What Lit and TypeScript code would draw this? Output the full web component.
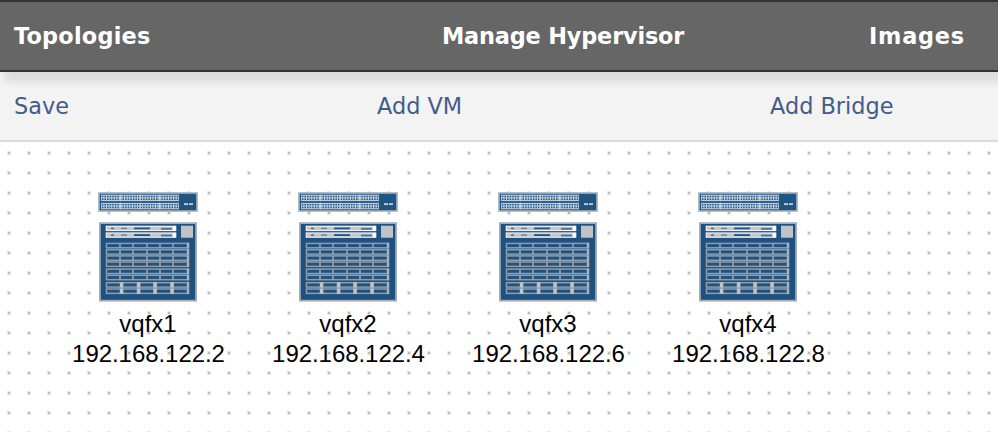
import { LitElement, html, css, svg } from "lit";
import { customElement, property } from "lit/decorators.js";

const range = (n: number) => Array.from({ length: n }, (_, i) => i);

@customElement("switch-icon")
class SwitchIcon extends LitElement {
  static styles = css`
    :host { display: block; width: 100px; height: 110px; }
    svg { display: block; }
  `;

  private ports(y: number) {
    return svg`
      <rect x="3" y=${y} width="78" height="6.4" fill="#b9cbdc"/>
      ${range(30).map((i) => svg`
        <rect x=${3.9 + i * 2.58} y=${y + 1.1} width="1.5" height="1.5" fill="#235484"/>
        <rect x=${3.9 + i * 2.58} y=${y + 3.8} width="1.5" height="1.5" fill="#235484"/>`)}
      ${[22.5, 42, 61.5].map((x) => svg`<rect x=${x - 0.2} y=${y} width="0.8" height="6.4" fill="#e4ecf4"/>`)}`;
  }

  private slot(y: number) {
    return svg`
      <rect x="7.7" y=${y} width="70.6" height="5.4" fill="#f6f8fa"/>
      <rect x="8.7" y=${y + 1} width="66" height="3.4" fill="#c4c6ca"/>
      <rect x="13" y=${y + 2} width="3" height="1.4" fill="#41688f"/>
      <rect x="23" y=${y + 2} width="6" height="1.4" fill="#6d87a3"/>
      <rect x="36" y=${y + 1.8} width="16" height="1.8" fill="#1f5687"/>
      <rect x="63" y=${y + 2.2} width="11" height="1.8" fill="#4c7298"/>`;
  }

  private card(y: number) {
    return svg`
      <rect x="8.5" y=${y} width="82.1" height="4.4" fill="#20527f" stroke="#8f9dab" stroke-width="1.5"/>
      ${[22, 35, 49, 62, 75].map((x) => svg`<rect x=${x - 0.8} y=${y} width="1.6" height="4.4" fill="#96a4b2"/>`)}
      <rect x="88.8" y=${y - 0.6} width="2.2" height="5.6" fill="#a9b3bf"/>`;
  }

  private power(y: number) {
    return svg`
      <rect x="8.5" y=${y} width="82.1" height="4.4" fill="#20527f" stroke="#8f9dab" stroke-width="1.5"/>
      ${[23.5, 40.5, 57, 74].map((x) => svg`<rect x=${x - 1.7} y=${y - 0.5} width="3.6" height="5.4" fill="#c0c3c7"/>`)}
      <rect x="88.8" y=${y - 0.6} width="2.2" height="5.6" fill="#a9b3bf"/>`;
  }

  render() {
    return html`<svg width="100" height="110" viewBox="0 0 100 110">
      <rect x="0.9" y="0.9" width="98.2" height="18.2" fill="#1f5583" stroke="#b1b9c2" stroke-width="1.7"/>
      ${this.ports(2.7)}${this.ports(10.9)}
      <rect x="86" y="11.2" width="4" height="1.8" fill="#c3cfdb"/>
      <rect x="91" y="11.2" width="4" height="1.8" fill="#c3cfdb"/>
      <rect x="1.9" y="31.1" width="96.2" height="77.6" fill="#1f5180" stroke="#a3afbb" stroke-width="1.8"/>
      ${this.slot(33.7)}${this.slot(40.4)}
      <rect x="83" y="33.7" width="12" height="12" fill="#c1c2c6"/>
      ${[51.4, 57.7, 63.9, 70, 77.1, 83.3].map((y) => this.card(y))}
      ${[90.7, 97].map((y) => this.power(y))}
    </svg>`;
  }
}

@customElement("topology-node")
class TopologyNode extends LitElement {
  @property() name = "";
  @property() address = "";

  static styles = css`
    :host {
      display: flex; flex-direction: column; align-items: center; width: 200px;
      font: 24px/30px "Liberation Sans", Arial, sans-serif; color: #000;
    }
    .name { margin-top: 7px; }
    .name, .address { white-space: nowrap; }
    .address { letter-spacing: -0.05px; padding-left: 1px; }
  `;

  render() {
    return html`<switch-icon></switch-icon>
      <div class="name">${this.name}</div>
      <div class="address">${this.address}</div>`;
  }
}

@customElement("app-root")
class AppRoot extends LitElement {
  static styles = css`
    :host {
      display: flex; flex-direction: column; height: 432px; overflow: hidden;
      background: #fff; font: 22.4px/28px "DejaVu Sans", Verdana, sans-serif;
    }
    nav {
      display: grid; align-items: center; box-sizing: border-box;
      flex: none; padding-left: 14px; white-space: nowrap;
    }
    .main {
      grid-template-columns: 428px 427px auto; height: 72px; position: relative;
      background: #666; color: #fff; font-weight: bold;
      border-top: 2px solid #333; border-bottom: 2px solid #333;
      box-shadow: 4px 10px 8px rgba(0, 0, 0, 0.095);
    }
    .topologies { letter-spacing: 0.22px; }
    .hypervisor { letter-spacing: -0.17px; }
    .images { letter-spacing: 0.75px; }
    .actions {
      grid-template-columns: 363px 393px auto; height: 70px;
      background: #f3f3f3; color: #415d8c; border-bottom: 2px solid #ddd;
    }
    .canvas {
      flex: 1; display: flex; align-items: flex-start; padding: 50px 0 0 48px;
      background: url("data:image/svg+xml,%3Csvg xmlns='http://www.w3.org/2000/svg' width='20' height='20'%3E%3Cpath fill='%23e8e8e8' d='M7 9h4v4H7z'/%3E%3Cpath fill='%23bbb' d='M8 10h2v2H8z'/%3E%3C/svg%3E");
    }
  `;

  private nodes = [
    ["vqfx1", "192.168.122.2"],
    ["vqfx2", "192.168.122.4"],
    ["vqfx3", "192.168.122.6"],
    ["vqfx4", "192.168.122.8"],
  ];

  render() {
    return html`
      <nav class="main"><span class="topologies">Topologies</span><span class="hypervisor">Manage Hypervisor</span><span class="images">Images</span></nav>
      <nav class="actions"><span>Save</span><span>Add VM</span><span>Add Bridge</span></nav>
      <div class="canvas">
        ${this.nodes.map(([name, address]) => html`<topology-node .name=${name} .address=${address}></topology-node>`)}
      </div>`;
  }
}
